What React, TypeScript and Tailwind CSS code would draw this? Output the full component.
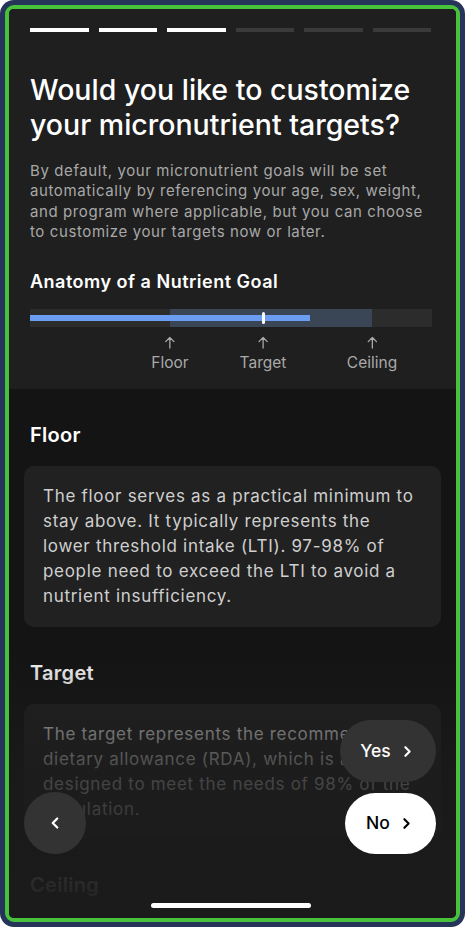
import React from 'react';

const FONT = { fontFamily: 'Inter, "Noto Sans", sans-serif' };

function Chevron({ dir = 'right', className = '' }: { dir?: 'right' | 'left'; className?: string }) {
  return (
    <svg viewBox="0 0 24 24" className={className} fill="none" stroke="currentColor" strokeWidth={3} strokeLinecap="round" strokeLinejoin="round">
      {dir === 'right' ? <path d="M9 6l6 6-6 6" /> : <path d="M15 6l-6 6 6 6" />}
    </svg>
  );
}

function GoalBar() {
  const labels = [
    { text: 'Floor', x: 140 },
    { text: 'Target', x: 233 },
    { text: 'Ceiling', x: 342 },
  ];
  return (
    <div className="relative w-[402px] h-[64px] mt-[15px]">
      <div className="absolute left-0 top-0 w-[402px] h-[18px] bg-[#2c2c2c]" />
      <div className="absolute left-[140px] top-0 w-[202px] h-[18px] bg-[#3a4556]" />
      <div className="absolute left-0 top-[6px] w-[280px] h-[6px] bg-[#6b9ef2]" />
      <div className="absolute left-[232px] top-[3px] w-[3px] h-[12px] rounded-full bg-white" />
      {labels.map((l) => (
        <div key={l.text} className="absolute top-[27px] flex flex-col items-center -translate-x-1/2 text-[#a9a9a9]" style={{ left: l.x }}>
          <svg viewBox="0 0 12 14" className="w-[11px] h-[13px]" fill="none" stroke="currentColor" strokeWidth={1.4} strokeLinecap="round" strokeLinejoin="round">
            <path d="M6 13V1.5M1.5 6L6 1.5 10.5 6" />
          </svg>
          <span className="text-[15.5px] leading-[20px] mt-[4px]">{l.text}</span>
        </div>
      ))}
    </div>
  );
}

function Section({ title, body }: { title: string; body?: string }) {
  return (
    <div>
      <h2 className="px-[21px] text-[20px] leading-[26px] font-semibold tracking-[0.3px] text-white">{title}</h2>
      {body && (
        <div className="mx-[15px] mt-[18px] rounded-[10px] bg-[#212121] px-[19px] pt-[18px] pb-[17px]">
          <p className="text-[17px] leading-[25.2px] tracking-[0.7px] text-[#cfcfcf]">{body}</p>
        </div>
      )}
    </div>
  );
}

export default function App() {
  return (
    <div className="w-[465px] h-[927px] bg-[#26345a] rounded-[14px] p-[5px]" style={FONT}>
      <div className="w-full h-full border-4 border-[#49c23b] rounded-[9px] overflow-hidden">
        <div className="relative w-full h-full bg-[#141414] overflow-hidden">
          <div className="bg-[#1f1f1f] pl-[21px] pr-[25px] pt-[19px] pb-[16px]">
            <div className="flex gap-[10px]">
              {[0, 1, 2, 3, 4, 5].map((i) => (
                <div key={i} className={`h-[4px] flex-1 ${i < 3 ? 'bg-white' : 'bg-[#3a3a3a]'}`} />
              ))}
            </div>
            <h1 className="mt-[40px] text-[28.5px] leading-[35px] font-medium text-white">
              Would you like to customize your micronutrient targets?
            </h1>
            <p className="mt-[19px] text-[15px] leading-[20.4px] tracking-[0.6px] text-[#a8a8a8]">
              By default, your micronutrient goals will be set automatically by referencing your age, sex, weight, and program where applicable, but you can choose to customize your targets now or later.
            </p>
            <h3 className="mt-[27px] text-[18px] leading-[24px] font-semibold tracking-[0.5px] text-white">Anatomy of a Nutrient Goal</h3>
            <GoalBar />
          </div>

          <div className="pt-[33px] flex flex-col gap-[33px]">
            <Section
              title="Floor"
              body="The floor serves as a practical minimum to stay above. It typically represents the lower threshold intake (LTI). 97-98% of people need to exceed the LTI to avoid a nutrient insufficiency."
            />
            <Section
              title="Target"
              body="The target represents the recommended dietary allowance (RDA), which is a level designed to meet the needs of 98% of the population."
            />
            <Section title="Ceiling" />
          </div>

          <div className="absolute left-0 right-0 top-[640px] bottom-0 bg-gradient-to-b from-[#1b1b1b]/0 via-[#1b1b1b]/75 via-45% to-[#1b1b1b]/95 to-90%" />

          <button className="absolute right-[20px] top-[711px] w-[96px] h-[62px] rounded-full bg-[#333333] flex items-center justify-center gap-[8px] text-white text-[17.5px] font-medium">
            Yes <Chevron className="w-[17px] h-[17px]" />
          </button>
          <button className="absolute right-[20px] top-[784px] w-[91px] h-[61px] rounded-full bg-white flex items-center justify-center gap-[8px] text-black text-[17.5px] font-medium">
            No <Chevron className="w-[17px] h-[17px]" />
          </button>
          <button className="absolute left-[15px] top-[783px] w-[62px] h-[62px] rounded-full bg-[#333333] flex items-center justify-center text-white">
            <Chevron dir="left" className="w-[18px] h-[18px]" />
          </button>

          <div className="absolute left-[142px] top-[894px] w-[160px] h-[5px] rounded-full bg-white" />
        </div>
      </div>
    </div>
  );
}
